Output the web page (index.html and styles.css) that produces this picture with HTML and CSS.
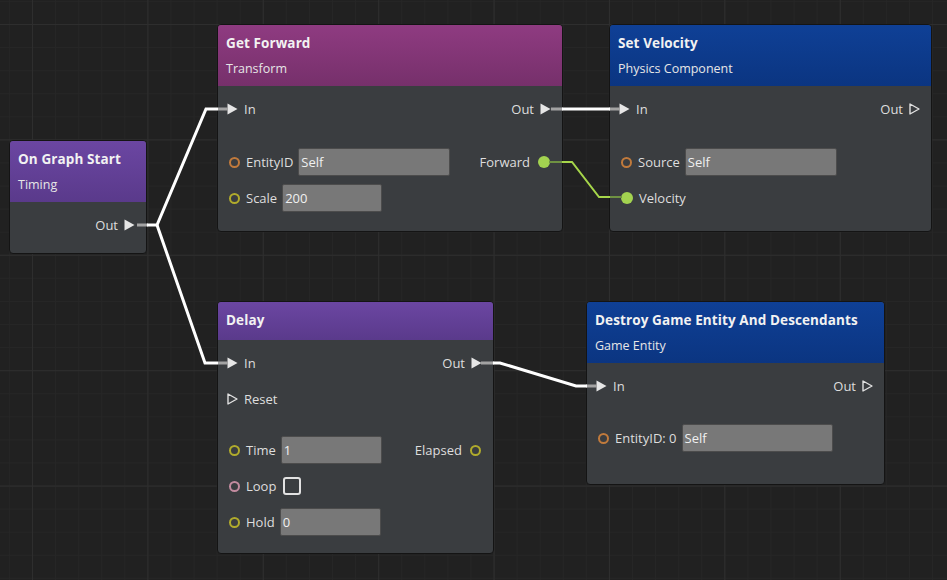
FILE: index.html
```html
<!DOCTYPE html>
<html>
<head>
<meta charset="utf-8">
<link rel="stylesheet" href="styles.css">
</head>
<body>
<div class="canvas">

  <div class="node n-start">
    <div class="hdr purple">
      <div class="title">On Graph Start</div>
      <div class="sub">Timing</div>
    </div>
    <div class="body">
      <div class="row">
        <span></span>
        <div class="pin-out"><span class="lbl">Out</span><svg class="tri" width="11" height="12" viewBox="0 0 11 12"><path d="M0.5 0.5 L10.5 6 L0.5 11.5 Z" fill="#e6e6e6"/></svg></div>
      </div>
    </div>
  </div>

  <div class="node n-fwd">
    <div class="hdr magenta">
      <div class="title">Get Forward</div>
      <div class="sub">Transform</div>
    </div>
    <div class="body">
      <div class="row">
        <div class="pin-in"><svg class="tri" width="11" height="12" viewBox="0 0 11 12"><path d="M0.5 0.5 L10.5 6 L0.5 11.5 Z" fill="#e6e6e6"/></svg><span class="lbl">In</span></div>
        <div class="pin-out"><span class="lbl">Out</span><svg class="tri" width="11" height="12" viewBox="0 0 11 12"><path d="M0.5 0.5 L10.5 6 L0.5 11.5 Z" fill="#e6e6e6"/></svg></div>
      </div>
      <div class="data">
        <div class="row">
          <div class="pin-in"><span class="dot ring orange"></span><span class="lbl">EntityID</span><span class="field w152">Self</span></div>
          <div class="pin-out"><span class="lbl">Forward</span><span class="dot fill green"></span></div>
        </div>
        <div class="row">
          <div class="pin-in"><span class="dot ring olive"></span><span class="lbl">Scale</span><span class="field w100">200</span></div>
        </div>
      </div>
    </div>
  </div>

  <div class="node n-vel">
    <div class="hdr blue">
      <div class="title">Set Velocity</div>
      <div class="sub">Physics Component</div>
    </div>
    <div class="body">
      <div class="row">
        <div class="pin-in"><svg class="tri" width="11" height="12" viewBox="0 0 11 12"><path d="M0.5 0.5 L10.5 6 L0.5 11.5 Z" fill="#e6e6e6"/></svg><span class="lbl">In</span></div>
        <div class="pin-out"><span class="lbl">Out</span><svg class="tri" width="11" height="12" viewBox="0 0 11 12"><path d="M1 1 L10 6 L1 11 Z" fill="none" stroke="#e0e0e0" stroke-width="1.4" stroke-linejoin="round"/></svg></div>
      </div>
      <div class="data">
        <div class="row">
          <div class="pin-in"><span class="dot ring orange"></span><span class="lbl">Source</span><span class="field w152">Self</span></div>
        </div>
        <div class="row">
          <div class="pin-in"><span class="dot fill green"></span><span class="lbl">Velocity</span></div>
        </div>
      </div>
    </div>
  </div>

  <div class="node n-delay">
    <div class="hdr purple short">
      <div class="title">Delay</div>
    </div>
    <div class="body">
      <div class="row">
        <div class="pin-in"><svg class="tri" width="11" height="12" viewBox="0 0 11 12"><path d="M0.5 0.5 L10.5 6 L0.5 11.5 Z" fill="#e6e6e6"/></svg><span class="lbl">In</span></div>
        <div class="pin-out"><span class="lbl">Out</span><svg class="tri" width="11" height="12" viewBox="0 0 11 12"><path d="M0.5 0.5 L10.5 6 L0.5 11.5 Z" fill="#e6e6e6"/></svg></div>
      </div>
      <div class="row tight">
        <div class="pin-in"><svg class="tri" width="11" height="12" viewBox="0 0 11 12"><path d="M1 1 L10 6 L1 11 Z" fill="none" stroke="#e0e0e0" stroke-width="1.4" stroke-linejoin="round"/></svg><span class="lbl">Reset</span></div>
      </div>
      <div class="data">
        <div class="row">
          <div class="pin-in"><span class="dot ring olive"></span><span class="lbl">Time</span><span class="field w101">1</span></div>
          <div class="pin-out"><span class="lbl">Elapsed</span><span class="dot ring olive"></span></div>
        </div>
        <div class="row">
          <div class="pin-in"><span class="dot ring pink"></span><span class="lbl">Loop</span><span class="check"></span></div>
        </div>
        <div class="row">
          <div class="pin-in"><span class="dot ring olive"></span><span class="lbl">Hold</span><span class="field w101">0</span></div>
        </div>
      </div>
    </div>
  </div>

  <div class="node n-destroy">
    <div class="hdr blue">
      <div class="title">Destroy Game Entity And Descendants</div>
      <div class="sub">Game Entity</div>
    </div>
    <div class="body">
      <div class="row">
        <div class="pin-in"><svg class="tri" width="11" height="12" viewBox="0 0 11 12"><path d="M0.5 0.5 L10.5 6 L0.5 11.5 Z" fill="#e6e6e6"/></svg><span class="lbl">In</span></div>
        <div class="pin-out"><span class="lbl">Out</span><svg class="tri" width="11" height="12" viewBox="0 0 11 12"><path d="M1 1 L10 6 L1 11 Z" fill="none" stroke="#e0e0e0" stroke-width="1.4" stroke-linejoin="round"/></svg></div>
      </div>
      <div class="data">
        <div class="row">
          <div class="pin-in"><span class="dot ring orange"></span><span class="lbl">EntityID: 0</span><span class="field w151">Self</span></div>
        </div>
      </div>
    </div>
  </div>

  <svg class="wires" width="947" height="580" viewBox="0 0 947 580">
    <g fill="none" stroke-linejoin="miter" stroke-linecap="butt">
      <path d="M137 225 H148 M218 109 H228 M218 363 H228 M551 109 H563 M609 109 H620 M481 363 H494 M586 386 H597" stroke="#a3a3a3" stroke-width="3"/>
      <path d="M147 225 H157 L206 109 H218" stroke="#ffffff" stroke-width="3"/>
      <path d="M157 225 L205 363 H218" stroke="#ffffff" stroke-width="3"/>
      <path d="M562 109 H610" stroke="#ffffff" stroke-width="3"/>
      <path d="M493 363 H500 L576 386 H587" stroke="#ffffff" stroke-width="3"/>
      <path d="M549 162 H563 M609 197 H622" stroke="#6f9242" stroke-width="2"/>
      <path d="M562 162 H572 L599 197 H610" stroke="#a6d64a" stroke-width="2"/>
    </g>
  </svg>

</div>
</body>
</html>
```

FILE: styles.css
```css
html, body {
  margin: 0;
  padding: 0;
}

body {
  width: 947px;
  height: 580px;
  overflow: hidden;
  font-family: "Open Sans", "Noto Sans", sans-serif;
  color: #dcdcdc;
}

.canvas {
  position: relative;
  width: 947px;
  height: 580px;
  background-color: #212121;
  background-image:
    linear-gradient(to right, #2e2e2e 1px, transparent 1px),
    linear-gradient(to bottom, #2e2e2e 1px, transparent 1px),
    linear-gradient(to right, #262626 1px, transparent 1px),
    linear-gradient(to bottom, #262626 1px, transparent 1px);
  background-size: 115.4px 115.4px, 115.4px 115.4px, 23.08px 23.08px, 23.08px 23.08px;
  background-position: 32px 24px, 32px 24px, 32px 24px, 32px 24px;
}

.node {
  position: absolute;
  box-sizing: border-box;
  border: 1px solid #141414;
  border-radius: 4px;
  background: #3a3d40;
  overflow: hidden;
  display: flex;
  flex-direction: column;
}

.n-start   { left: 9px;   top: 140px; width: 138px; height: 114px; }
.n-fwd     { left: 217px; top: 24px;  width: 346px; height: 208px; }
.n-vel     { left: 609px; top: 24px;  width: 323px; height: 208px; }
.n-delay   { left: 217px; top: 301px; width: 277px; height: 253px; }
.n-destroy { left: 586px; top: 301px; width: 299px; height: 184px; }

.hdr {
  height: 61px;
  flex: none;
  box-sizing: border-box;
  padding: 8px 8px 0 8px;
  color: #f2f2f2;
}
.hdr.short { height: 38px; padding-top: 8px; }

.purple  { background: linear-gradient(#6b46a2, #5a3a8b); }
.magenta { background: linear-gradient(#8f3b81, #76306b); }
.blue    { background: linear-gradient(#0f4096, #0b3581); }

.title {
  font-weight: 700;
  font-size: 13.5px;
  line-height: 20px;
  letter-spacing: 0.1px;
}
.sub {
  font-size: 12.5px;
  line-height: 20px;
  margin-top: 6px;
  color: #e6e6e6;
}

.body {
  padding-top: 5px;
  font-size: 13px;
}

.data {
  margin-top: 17px;
}
.n-delay .data,
.n-destroy .data {
  margin-top: 16px;
}

.row {
  height: 36px;
  display: flex;
  align-items: center;
  justify-content: space-between;
}
.row.tight { height: 35px; }

.pin-in, .pin-out {
  display: flex;
  align-items: center;
  height: 36px;
}

.pin-in .tri { margin-left: 9px; margin-right: 6px; }
.pin-out .tri { margin-left: 6px; margin-right: 11px; }

.lbl {
  white-space: nowrap;
  line-height: 18px;
  color: #dedede;
}

.dot {
  width: 11px;
  height: 11px;
  box-sizing: border-box;
  border-radius: 50%;
  flex: none;
}
.pin-in .dot { margin-left: 11px; margin-right: 6px; }
.pin-out .dot { margin-left: 8px; margin-right: 12px; }

.ring { border: 2px solid; }
.orange { border-color: #c07a3c; }
.olive  { border-color: #b0ab2c; }
.pink   { border-color: #c28b9f; }
.fill.green { background: #a3d350; width: 12px; height: 12px; }

.field {
  box-sizing: border-box;
  height: 28px;
  margin-left: 5px;
  padding-left: 2px;
  background: #787878;
  border: 1px solid #4c4c4c;
  border-radius: 2px;
  color: #f0f0f0;
  line-height: 26px;
  font-size: 13px;
}
.w152 { width: 152px; }
.w151 { width: 151px; }
.w101 { width: 101px; }
.w100 { width: 100px; }

.check {
  box-sizing: border-box;
  width: 18px;
  height: 18px;
  margin-left: 7px;
  border: 2px solid #e2e2e2;
  border-radius: 3px;
}

.wires {
  position: absolute;
  left: 0;
  top: 0;
  pointer-events: none;
}
```
